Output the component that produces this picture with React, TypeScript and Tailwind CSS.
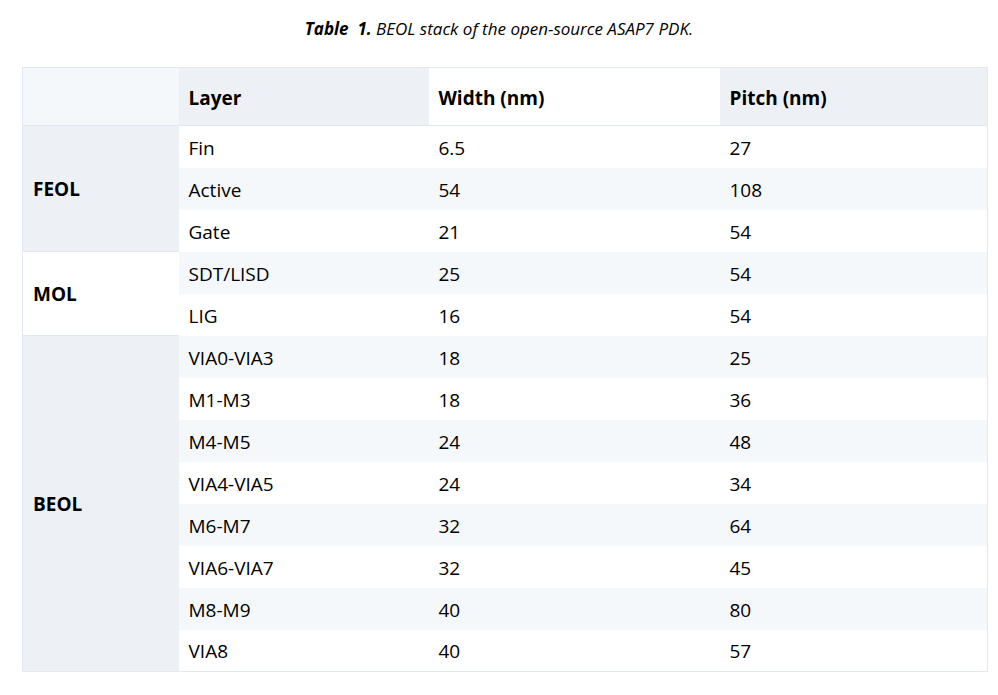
const groups = [
    {
        name: "FEOL",
        bg: "bg-[#edf1f5]",
        rows: [
            ["Fin", "6.5", "27"],
            ["Active", "54", "108"],
            ["Gate", "21", "54"],
        ],
    },
    {
        name: "MOL",
        bg: "bg-white",
        rows: [
            ["SDT/LISD", "25", "54"],
            ["LIG", "16", "54"],
        ],
    },
    {
        name: "BEOL",
        bg: "bg-[#edf1f5]",
        rows: [
            ["VIA0-VIA3", "18", "25"],
            ["M1-M3", "18", "36"],
            ["M4-M5", "24", "48"],
            ["VIA4-VIA5", "24", "34"],
            ["M6-M7", "32", "64"],
            ["VIA6-VIA7", "32", "45"],
            ["M8-M9", "40", "80"],
            ["VIA8", "40", "57"],
        ],
    },
];

export default function App() {
    let rowIndex = 0;

    return (
        <div className="min-h-[695px] bg-white text-black font-['Open_Sans','Noto_Sans',sans-serif]">
            <p className="pt-[17px] text-center text-[17px] italic leading-6">
                <span className="font-bold">Table&nbsp; 1.</span> BEOL stack of the open-source ASAP7 PDK.
            </p>

            <table className="ml-[22px] mt-[26px] w-[965px] table-fixed border-collapse border border-[#e2e8f0] text-[19px] leading-6">
                <colgroup>
                    <col className="w-[156px]" />
                    <col className="w-[250px]" />
                    <col className="w-[291px]" />
                    <col className="w-[268px]" />
                </colgroup>
                <thead>
                    <tr className="h-[58px] border-b border-[#e2e8f0] text-left font-bold">
                        <th className="bg-[#f5f8fb] px-[10px] pt-[2px]"></th>
                        <th className="bg-[#edf1f5] px-[10px] pt-[2px]">Layer</th>
                        <th className="bg-white px-[10px] pt-[2px]">Width (nm)</th>
                        <th className="bg-[#edf1f5] px-[10px] pt-[2px]">Pitch (nm)</th>
                    </tr>
                </thead>
                <tbody>
                    {groups.map((group) =>
                        group.rows.map((row, i) => {
                            const striped = rowIndex++ % 2 === 1;
                            const cellBg = striped ? "bg-[#f5f8fb]" : "bg-white";
                            return (
                                <tr key={row[0]} className="h-[42px]">
                                    {i === 0 && (
                                        <td
                                            rowSpan={group.rows.length}
                                            className={`${group.bg} border-b border-[#e2e8f0] px-[10px] font-bold`}
                                        >
                                            {group.name}
                                        </td>
                                    )}
                                    <td className={`${cellBg} px-[10px] pt-[2px]`}>{row[0]}</td>
                                    <td className={`${cellBg} px-[10px] pt-[2px]`}>{row[1]}</td>
                                    <td className={`${cellBg} px-[10px] pt-[2px]`}>{row[2]}</td>
                                </tr>
                            );
                        })
                    )}
                </tbody>
            </table>
        </div>
    );
}
